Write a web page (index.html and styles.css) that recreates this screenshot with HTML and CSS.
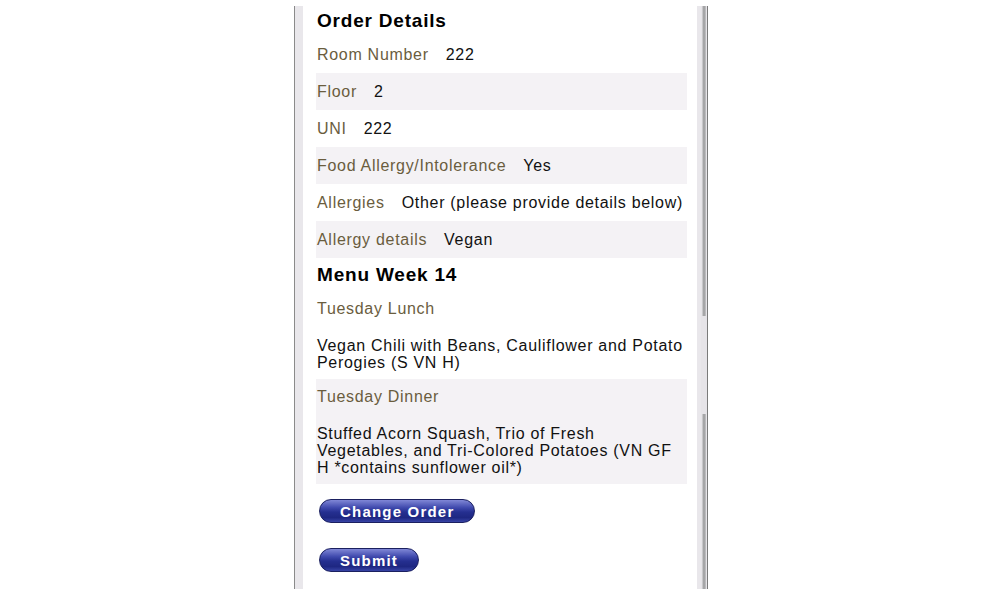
FILE: index.html
```html
<!DOCTYPE html>
<html lang="en">
<head>
  <meta charset="UTF-8">
  <meta name="viewport" content="width=device-width, initial-scale=1.0">
  <title>Order Details</title>
  <link rel="stylesheet" href="styles.css">
</head>
<body>
  <div class="frame">
    <div class="gutter"></div>
    <main class="content">
      <h2 class="title">Order Details</h2>
      <div class="row"><span class="label">Room Number</span><span class="value">222</span></div>
      <div class="row shaded"><span class="label">Floor</span><span class="value">2</span></div>
      <div class="row"><span class="label">UNI</span><span class="value">222</span></div>
      <div class="row shaded"><span class="label">Food Allergy/Intolerance</span><span class="value">Yes</span></div>
      <div class="row"><span class="label">Allergies</span><span class="value">Other (please provide details below)</span></div>
      <div class="row shaded"><span class="label">Allergy details</span><span class="value">Vegan</span></div>

      <h2 class="title menu-title">Menu Week 14</h2>
      <div class="meal">
        <div class="label">Tuesday Lunch</div>
        <p class="dish">Vegan Chili with Beans, Cauliflower and Potato Perogies (S VN H)</p>
      </div>
      <div class="meal shaded">
        <div class="label">Tuesday Dinner</div>
        <p class="dish">Stuffed Acorn Squash, Trio of Fresh Vegetables, and Tri-Colored Potatoes (VN GF H *contains sunflower oil*)</p>
      </div>

      <div class="actions">
        <button class="pill">Change Order</button>
        <button class="pill">Submit</button>
      </div>
    </main>
    <div class="gutter narrow"></div>
    <div class="scrollbar">
      <div class="thumb"></div>
      <div class="gap"></div>
      <div class="thumb grow"></div>
    </div>
  </div>
</body>
</html>
```
FILE: styles.css
```css
body {
  margin: 0;
  background: #fff;
  font-family: "Liberation Sans", Arial, sans-serif;
  color: #111;
}
.frame {
  display: flex;
  width: 414px;
  height: 583px;
  margin: 6px 0 0 294px;
  border-left: 1px solid #8a8a8a;
  border-right: 1px solid #7a7a7a;
  box-sizing: border-box;
  overflow: hidden;
}
.gutter {
  width: 8px;
  background: #e9e7eb;
}
.gutter.narrow {
  width: 4px;
}
.content {
  flex: 1;
  padding: 0 10px 0 13px;
  min-width: 0;
}
.title {
  margin: 0;
  padding-left: 1px;
  font-size: 19px;
  font-weight: bold;
  letter-spacing: 0.8px;
  line-height: 30px;
  color: #000;
}
.menu-title {
  line-height: 33px;
}
.row {
  display: flex;
  gap: 17px;
  padding: 0 1px;
  height: 37px;
  line-height: 37px;
  font-size: 16px;
  letter-spacing: 0.7px;
  white-space: nowrap;
}
.shaded {
  background: #f4f2f5;
}
.label {
  color: #6a5d3e;
}
.meal {
  padding: 0 1px 8px;
  font-size: 16px;
  letter-spacing: 0.7px;
}
.meal .label {
  line-height: 36px;
}
.dish {
  margin: 10px 0 0;
  line-height: 17px;
}
.actions {
  display: flex;
  flex-direction: column;
  align-items: flex-start;
  gap: 25px;
  padding: 15px 0 0 3px;
}
.pill {
  height: 24px;
  padding: 0 20px;
  border: 1px solid #1b2060;
  border-radius: 12px;
  background: linear-gradient(#8087d6 0%, #3f49ad 35%, #252f90 55%, #1e2782 80%, #3844a6 100%);
  color: #fff;
  font-family: "Liberation Sans", Arial, sans-serif;
  font-size: 15px;
  font-weight: bold;
  letter-spacing: 1.2px;
  cursor: pointer;
}
.scrollbar {
  display: flex;
  flex-direction: column;
  width: 6px;
  background: #e6e4e8;
}
.thumb {
  height: 310px;
  margin: 0 1px 0 1px;
  background: #a6a6a8;
  border-left: 1px solid #c8c8ca;
  border-right: 1px solid #bcbcbe;
}
.gap {
  height: 98px;
}
.thumb.grow {
  flex: 1;
  height: auto;
}
```
